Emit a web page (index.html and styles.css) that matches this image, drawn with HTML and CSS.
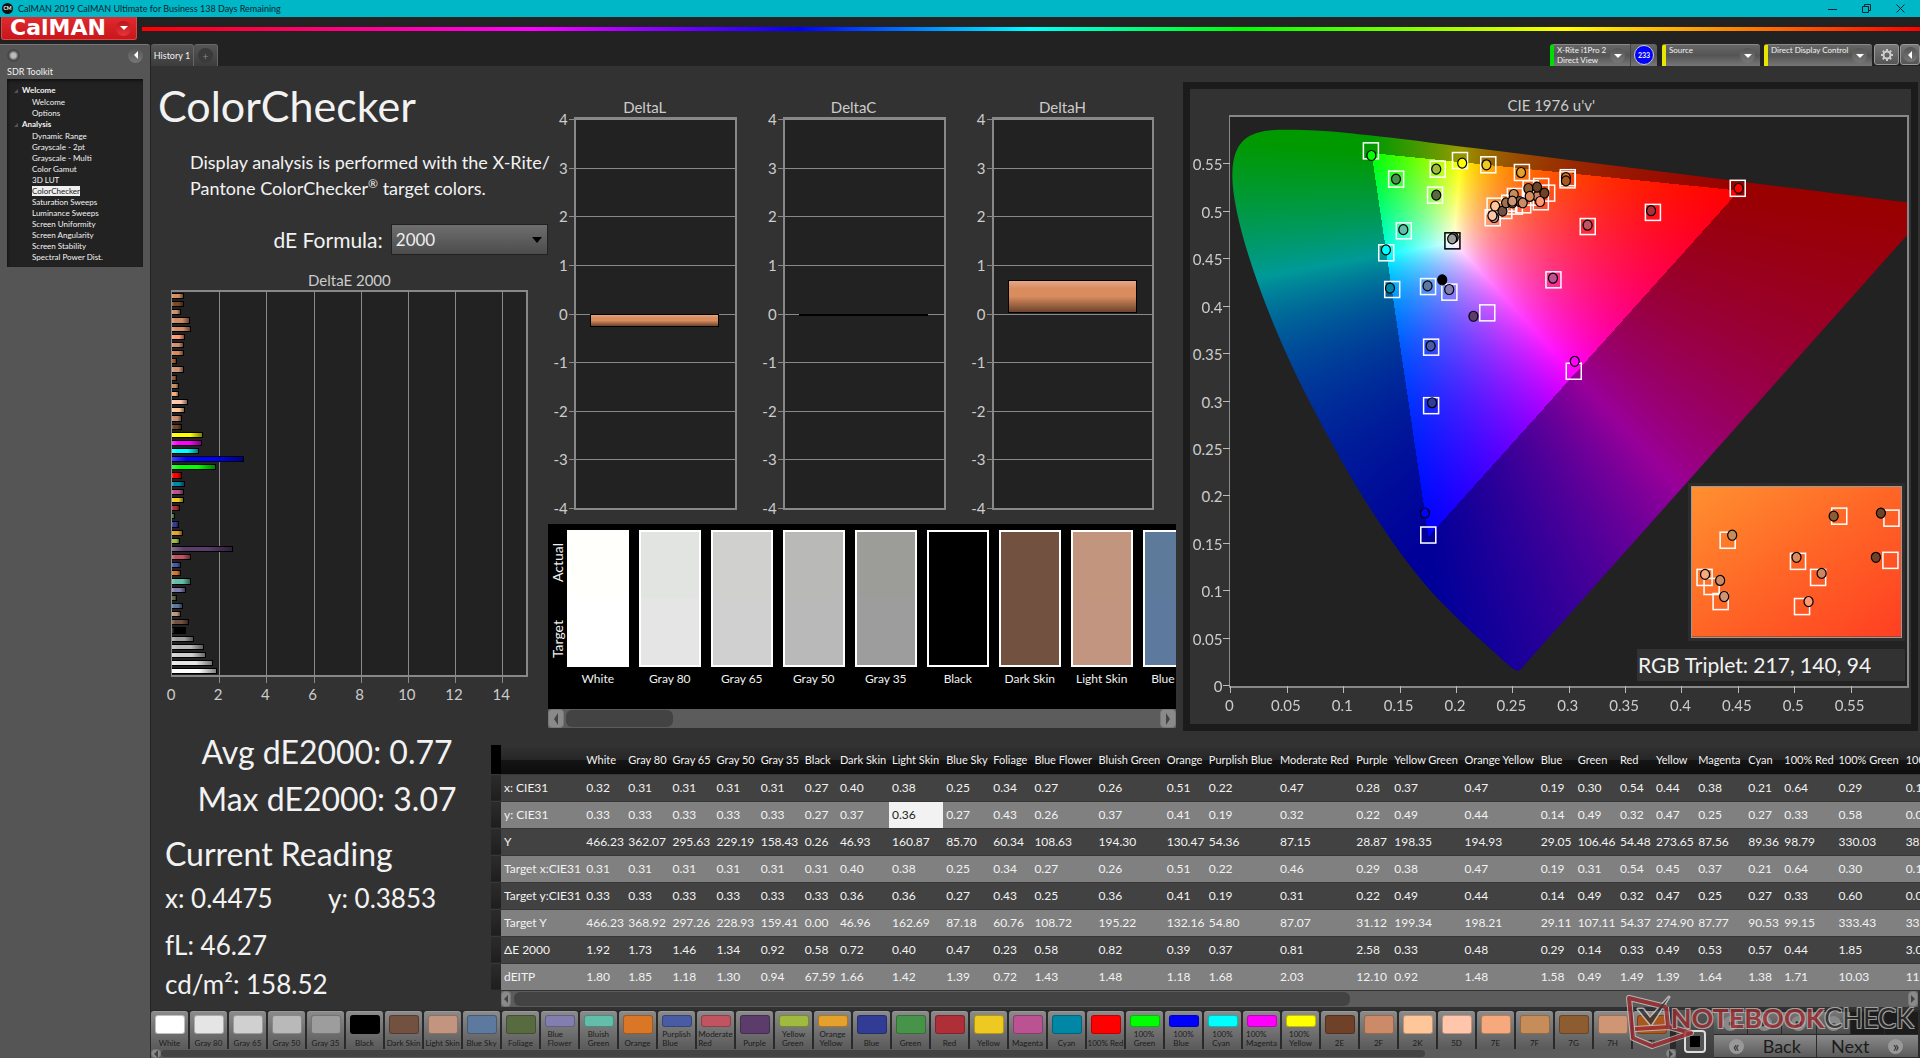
FILE: index.html
```html
<!DOCTYPE html>
<html lang="en">
<head>
    <meta charset="UTF-8">
    <meta name="viewport" content="width=device-width, initial-scale=1.0">
    <title>CalMAN 2019</title>
    <link rel="stylesheet" href="styles.css">
</head>
<body>
    <div class="titlebar">
        <span class="app-icon">CM</span>
        <span class="app-title">CalMAN 2019 CalMAN Ultimate for Business 138 Days Remaining</span>
        <div class="window-buttons">
            <button aria-label="Minimize"><svg width="9" height="9" viewBox="0 0 9 9"><path d="M0 5.5h9"/></svg></button>
            <button aria-label="Restore"><svg width="9" height="9" viewBox="0 0 9 9"><path d="M.5 2.500h6v6h-6zM2.500 2.500v-2h6v6h-2"/></svg></button>
            <button aria-label="Close"><svg width="9" height="9" viewBox="0 0 9 9"><path d="M.5.5l8 8M8.500.5l-8 8"/></svg></button>
        </div>
    </div>

    <div class="brandbar">
        <button class="logo">CalMAN <span class="round round-red"><i class="down"></i></span></button>
        <div class="rainbow"></div>
    </div>

    <div class="main">
        <div class="sidebar">
            <div class="sidebar-top">
                <span class="dot"></span>
                <button class="round" aria-label="Collapse"><i class="left"></i></button>
            </div>
            <div class="toolkit">SDR Toolkit</div>
            <ul class="tree">
                <li class="group">Welcome</li>
                <li>Welcome</li>
                <li>Options</li>
                <li class="group">Analysis</li>
                <li>Dynamic Range</li>
                <li>Grayscale - 2pt</li>
                <li>Grayscale - Multi</li>
                <li>Color Gamut</li>
                <li>3D LUT</li>
                <li><span class="current">ColorChecker</span></li>
                <li>Saturation Sweeps</li>
                <li>Luminance Sweeps</li>
                <li>Screen Uniformity</li>
                <li>Screen Angularity</li>
                <li>Screen Stability</li>
                <li>Spectral Power Dist.</li>
            </ul>
        </div>

        <div class="workspace">
            <div class="tabs">
                <button class="tab">History 1</button>
                <button class="tab tab-add" aria-label="Add tab"><span class="round">+</span></button>
                <div class="devices">
                    <button class="device meter"><span>X-Rite i1Pro 2<br>Direct View</span><span class="round"><i class="down"></i></span></button>
                    <span class="count"><b>233</b></span>
                    <button class="device source"><span>Source</span><span class="round"><i class="down"></i></span></button>
                    <button class="device display"><span>Direct Display Control</span><span class="round"><i class="down"></i></span></button>
                    <button class="square-button gear" aria-label="Settings">
                        <svg width="14" height="14" viewBox="0 0 14 14"><circle cx="7" cy="7" r="3.500"/><path d="M7 1v2M7 11v2M1 7h2M11 7h2M2.800 2.800l1.400 1.400M9.800 9.800l1.400 1.400M11.200 2.800l-1.400 1.400M4.200 9.800l-1.400 1.400"/></svg>
                    </button>
                    <button class="square-button" aria-label="Hide devices"><span class="round"><i class="left"></i></span></button>
                </div>
            </div>

            <div class="content">
                <div class="upper">
                    <div class="intro">
                        <h1>ColorChecker</h1>
                        <p>Display analysis is performed with the X-Rite/<br>Pantone ColorChecker<sup>®</sup> target colors.</p>
                        <div class="formula">
                            <label for="formula">dE Formula:</label>
                            <div class="select-box">
                                <select id="formula"><option>2000</option></select>
                                <i class="down"></i>
                            </div>
                        </div>
                        <div class="chart-title">DeltaE 2000</div>
                        <div class="de-plot" id="de-plot"></div>
                    </div>

                    <div class="middle">
                        <div class="deltas">
                            <div class="delta"><div class="chart-title">DeltaL</div><div class="delta-plot" data-value="-0.27"></div></div>
                            <div class="delta"><div class="chart-title">DeltaC</div><div class="delta-plot" data-value="0"></div></div>
                            <div class="delta"><div class="chart-title">DeltaH</div><div class="delta-plot" data-value="0.68"></div></div>
                        </div>
                        <div class="patches">
                            <div class="patch-side"><span>Actual</span><span>Target</span></div>
                            <div class="patch-list" id="patch-list"></div>
                        </div>
                        <div class="scrollbar patch-scroll">
                            <button aria-label="Scroll left"><i class="left"></i></button>
                            <div class="track"><div class="thumb"></div></div>
                            <button aria-label="Scroll right"><i class="right"></i></button>
                        </div>
                    </div>

                    <div class="cie">
                        <div class="chart-title">CIE 1976 u'v'</div>
                        <div class="cie-plot" id="cie-plot">
                            <canvas id="gamut"></canvas>
                            <svg class="markers" id="markers"></svg>
                            <svg class="inset" id="inset" viewBox="0 0 208 149"></svg>
                            <div class="triplet">RGB Triplet: 217, 140, 94</div>
                        </div>
                    </div>
                </div>

                <div class="lower">
                    <div class="readings">
                        <div class="summary">Avg dE2000: 0.77</div>
                        <div class="summary">Max dE2000: 3.07</div>
                        <h2>Current Reading</h2>
                        <div class="reading"><span>x: 0.4475</span><span>y: 0.3853</span></div>
                        <div class="reading">fL: 46.27</div>
                        <div class="reading last">cd/m²: 158.52</div>
                    </div>
                    <div class="data">
                        <div class="table-box">
                            <table id="data-table"></table>
                        </div>
                        <div class="scrollbar table-scroll">
                            <button aria-label="Scroll left"><i class="left"></i></button>
                            <div class="track"><div class="thumb"></div></div>
                            <button aria-label="Scroll right"><i class="right"></i></button>
                        </div>
                    </div>
                </div>
            </div>

            <div class="bottom">
                <div class="strip">
                    <div class="strip-list" id="strip-list"></div>
                    <div class="scrollbar strip-scroll">
                        <button aria-label="Scroll left"><i class="left"></i></button>
                        <div class="track"><div class="thumb"></div></div>
                        <button aria-label="Scroll right"><i class="right"></i></button>
                    </div>
                </div>
                <div class="stop-box"><button class="stop" aria-label="Stop"></button></div>
                <div class="nav">
                    <div class="transport">
                        <button aria-label="Read"><span class="round">■</span></button>
                        <button aria-label="Play"><span class="round">▶</span></button>
                        <button aria-label="Series"><span class="round">▮▮</span></button>
                        <button aria-label="Continuous"><span class="round">∞</span></button>
                        <span class="off"></span>
                        <span class="off"></span>
                    </div>
                    <div class="pages">
                        <button><span class="round">«</span>Back</button>
                        <button>Next<span class="round">»</span></button>
                    </div>
                </div>
                <div class="watermark">
                    <svg width="70" height="54" viewBox="0 0 70 54">
                        <g class="wm-edge">
                            <path d="M41 12L4 3l4 40 19 8 39-13-22-6-34 2M41 12l2 19"/>
                            <path class="wm-tick" d="M13 14l5 0 7 9L44 2 26 30z"/>
                        </g>
                        <path class="wm-red" d="M41 12L4 3l4 40 19 8 39-13-22-6-34 2M41 12l2 19"/>
                        <path class="wm-dark" d="M13 14l5 0 7 9L44 2 26 30z"/>
                    </svg>
                    <span class="wm-text"><b>NOTEBOOK</b>CHECK</span>
                </div>
            </div>
        </div>
    </div>
    <script src="script.js"></script>
</body>
</html>
```
FILE: styles.css
```css
* {
    box-sizing: border-box;
}

body {
    margin: 0;
    height: 100vh;
    min-height: 1040px;
    display: flex;
    flex-direction: column;
    background: #222;
    color: #f2f2f2;
    font-family: Lato, "Open Sans", sans-serif;
    overflow: hidden;
}

button {
    margin: 0;
    padding: 0;
    border: 0;
    background: none;
    color: inherit;
    font-family: inherit;
}

/* small arrows and round badges */
.down, .left, .right {
    display: block;
    width: 0;
    height: 0;
    border: 4px solid transparent;
}
.down {
    border-width: 4px 4px 0;
    border-top-color: currentColor;
}
.left {
    border-left-width: 0;
    border-right-color: currentColor;
}
.right {
    border-right-width: 0;
    border-left-color: currentColor;
}
.round {
    display: flex;
    align-items: center;
    justify-content: center;
    flex: none;
    width: 15px;
    height: 15px;
    border-radius: 50%;
    background: linear-gradient(#555, #777);
    color: #fff;
}
.round-red {
    background: linear-gradient(#b8161b, #e5363b);
}

/* window title */
.titlebar {
    flex: none;
    display: flex;
    align-items: center;
    height: 17px;
    padding-left: 2px;
    background: #00b7c7;
    color: #06252b;
}
.app-icon {
    width: 11px;
    height: 11px;
    margin-right: 5px;
    border-radius: 50%;
    background: #111;
    color: #fff;
    font-size: 5px;
    line-height: 11px;
    font-weight: bold;
    text-align: center;
}
.app-title {
    font-size: 9px;
}
.window-buttons {
    display: flex;
    margin-left: auto;
    padding-right: 3px;
}
.window-buttons button {
    display: flex;
    align-items: center;
    justify-content: center;
    width: 34px;
    height: 17px;
}
.window-buttons path {
    fill: none;
    stroke: #06252b;
}

.brandbar {
    flex: none;
    display: flex;
    height: 27px;
    padding-left: 1px;
    gap: 5px;
}
.logo {
    display: flex;
    align-items: center;
    justify-content: space-between;
    width: 136px;
    height: 23px;
    padding: 0 5px 0 8px;
    border: 1px solid #d9484b;
    border-top: 0;
    border-radius: 0 0 3px 3px;
    background: linear-gradient(#e02a2f, #c8161b);
    color: #fff;
    font-family: "DejaVu Sans", sans-serif;
    font-size: 22px;
    line-height: 22px;
    font-weight: bold;
}
.rainbow {
    flex: 1;
    height: 4px;
    margin-top: 10px;
    background: linear-gradient(90deg, #f00 0%, #f0f 22%, #00f 37%, #0ff 50%, #0f0 62%, #ff0 80%, #f00 100%);
}

.main {
    flex: 1;
    display: flex;
    min-height: 0;
}

/* sidebar */
.sidebar {
    flex: none;
    width: 150px;
    padding: 0 7px;
    border-top: 1px solid #777;
    border-radius: 0 3px 0 0;
    background: #555;
}
.sidebar-top {
    display: flex;
    align-items: center;
    justify-content: space-between;
    height: 20px;
}
.dot {
    width: 13px;
    height: 13px;
    border-radius: 50%;
    background: radial-gradient(circle, #bbb 25%, #484848 55%);
}
.toolkit {
    font-size: 9px;
    line-height: 14px;
}
.tree {
    margin: 0;
    padding: 6px 0 4px 25px;
    list-style: none;
    background: #222;
    box-shadow: inset 1px 2px 3px #111;
    font-size: 8px;
    line-height: 11px;
}
.tree .group {
    margin: 0 0 1px -10px;
    font-weight: bold;
}
.tree .group::before {
    content: "";
    float: left;
    margin: 4px 0 0 -8px;
    border: 2px solid #555;
    border-left-color: transparent;
    border-top-color: transparent;
}
.current {
    background: #eee;
    color: #222;
}

.workspace {
    flex: 1;
    display: flex;
    flex-direction: column;
    min-width: 0;
}
.tabs {
    flex: none;
    display: flex;
    height: 22px;
    padding-left: 1px;
}
.tab {
    width: 43px;
    border: 1px solid #666;
    border-width: 1px 1px 0 0;
    border-radius: 3px 3px 0 0;
    background: linear-gradient(#555, #3c3c3c);
    font-size: 9px;
}
.tab-add {
    display: flex;
    align-items: center;
    justify-content: center;
    width: 24px;
}
.tab-add .round {
    background: #3a3a3a;
    color: #888;
    font-size: 10px;
}
.devices {
    display: flex;
    margin-left: auto;
}
.device {
    display: flex;
    align-items: center;
    justify-content: space-between;
    padding: 0 5px 0 3px;
    border-left: 4px solid #e6e600;
    border-top: 1px solid #888;
    border-radius: 3px 3px 0 0;
    background: linear-gradient(#666, #555 50%, #777);
    font-size: 8px;
    line-height: 10px;
    text-align: left;
}
.device > span:first-child {
    align-self: flex-start;
    white-space: nowrap;
}
.meter {
    width: 80px;
    border-left-color: #0d0;
    border-radius: 3px 0 0 0;
}
.source {
    width: 98px;
    margin: 0 4px 0 5px;
}
.display {
    width: 108px;
    margin-right: 2px;
}
.count {
    display: flex;
    align-items: center;
    justify-content: center;
    width: 27px;
    border-left: 1px solid #444;
    border-radius: 0 3px 0 0;
    background: linear-gradient(#666, #555 50%, #777);
}
.count b {
    width: 20px;
    height: 20px;
    border: 1px solid #ccc;
    border-radius: 50%;
    background: #00f;
    font-size: 7px;
    line-height: 18px;
    text-align: center;
}
.square-button {
    display: flex;
    align-items: center;
    justify-content: center;
    width: 20px;
    height: 21px;
    border: 1px solid #999;
    border-radius: 3px;
    background: linear-gradient(#777, #555);
}
.gear {
    width: 25px;
    margin-right: 1px;
}
.gear svg {
    fill: none;
    stroke: #ccc;
    stroke-width: 2;
}

.content {
    flex: 1;
    display: flex;
    flex-direction: column;
    min-height: 0;
    border-left: 1px solid #222;
    background: #323232;
}
.upper {
    flex: 1;
    display: grid;
    grid-template-columns: 397fr 636fr 737fr;
    min-height: 0;
}
.upper > div {
    min-width: 0;
    min-height: 0;
}

.intro {
    display: flex;
    flex-direction: column;
    padding: 14px 20px 55px 20px;
}
h1 {
    margin: 0 0 17px -13px;
    font-size: 43px;
    line-height: 52px;
    font-weight: normal;
}
.intro p {
    margin: 0 -20px 23px 19px;
    font-size: 18px;
    line-height: 26px;
    white-space: nowrap;
}
.intro sup {
    font-size: 12px;
    line-height: 0;
}
.formula {
    display: flex;
    align-items: center;
    justify-content: flex-end;
    gap: 8px;
    height: 31px;
    margin: 0 -20px 15px 0;
    font-size: 21px;
}
.select-box {
    position: relative;
    width: 157px;
}
.select-box select {
    width: 100%;
    height: 31px;
    padding-left: 4px;
    border: 1px solid #222;
    border-radius: 0;
    background: linear-gradient(#6e6e6e, #4c4c4c);
    color: #eee;
    font-family: inherit;
    font-size: 17px;
    appearance: none;
}
.select-box .down {
    position: absolute;
    right: 6px;
    top: 13px;
    border-width: 6px 5px 0;
    color: #000;
}
.chart-title {
    flex: none;
    color: #ccc;
    font-size: 15px;
    line-height: 20px;
    text-align: center;
}

/* DeltaE bars */
.de-plot {
    position: relative;
    flex: 1;
    display: flex;
    flex-direction: column;
    border: 2px solid #888;
    border-left-width: 1px;
    background: #222;
}
.de-row {
    position: relative;
    flex: 1;
    padding: 1px 0;
}
.de-bar {
    height: 100%;
    border: 1px solid #000;
    border-left: 0;
}
.grid-v, .grid-h {
    position: absolute;
    background: #8a8a8a;
}
.grid-v {
    top: 0;
    bottom: -8px;
    width: 1px;
}
.grid-h {
    left: -7px;
    right: 0;
    height: 1px;
}
.axis-x, .axis-y {
    position: absolute;
    color: #ccc;
    font-size: 15px;
    line-height: 20px;
}
.axis-x {
    top: 100%;
    width: 40px;
    margin: 9px 0 0 -21px;
    text-align: center;
}
.axis-y {
    right: 100%;
    margin: -10px 8px 0 0;
}

/* middle column */
.middle {
    display: flex;
    flex-direction: column;
    padding: 31px 0 4px 0;
}
.deltas {
    flex: 1;
    display: flex;
    gap: 25px;
    padding: 0 29px 14px 5px;
}
.delta {
    flex: 1;
    display: flex;
    flex-direction: column;
}
.delta-plot {
    position: relative;
    flex: 1;
    margin-left: 21px;
    border: 2px solid #888;
    background: #222;
}
.delta-bar {
    position: absolute;
    left: 9%;
    right: 10%;
    border: 1px solid #000;
    background: linear-gradient(#e5a888, #d98c5e 25%, #d98c5e 50%, #6b442c);
}
.patches {
    flex: none;
    display: flex;
    height: 185px;
    overflow: hidden;
    margin-right: 7px;
    background: #000;
}
.patch-side {
    flex: none;
    display: flex;
    justify-content: space-around;
    flex-direction: column;
    align-items: center;
    width: 19px;
    height: 153px;
    font-size: 14px;
}
.patch-side span {
    writing-mode: vertical-rl;
    transform: rotate(180deg);
}
.patch-list {
    display: flex;
    gap: 10px;
    padding-top: 6px;
}
.patch {
    flex: none;
    width: 62px;
    font-size: 12px;
    line-height: 24px;
    text-align: center;
    white-space: nowrap;
}
.patch-color {
    height: 137px;
    border: 2px solid #fff;
}

/* scrollbars */
.scrollbar {
    flex: none;
    display: flex;
    background: #5c5c5c;
    color: #444;
}
.scrollbar button {
    display: flex;
    align-items: center;
    justify-content: center;
    width: 16px;
    border: 1px solid #777;
    border-radius: 4px;
    background: #8a8a8a;
}
.track {
    flex: 1;
    padding: 1px 0;
}
.thumb {
    height: 100%;
    border-radius: 6px;
    background: #434343;
}
.patch-scroll {
    height: 19px;
    margin-right: 7px;
}
.patch-scroll .left, .patch-scroll .right {
    border-top-width: 6px;
    border-bottom-width: 6px;
}
.patch-scroll .track {
    padding-left: 2px;
}
.patch-scroll .thumb {
    width: 18%;
}
.table-scroll {
    height: 16px;
    margin: 1px 2px 0 10px;
}
.table-scroll button, .strip-scroll button {
    width: 10px;
}
.table-scroll .track {
    padding-left: 3px;
}
.table-scroll .thumb {
    width: 60%;
}
.strip-scroll {
    height: 9px;
}
.strip-scroll .thumb {
    width: 84%;
}

/* CIE chart */
.cie {
    display: flex;
    flex-direction: column;
    margin: 16px 2px 1px 0;
    padding: 6px 2px 36px 39px;
    border: 7px solid #1b1b1b;
    background: #323232;
}
.cie .chart-title {
    padding-right: 36px;
}
.cie-plot {
    position: relative;
    flex: 1;
    border: 2px solid #888;
    border-left-width: 1px;
    background: #222;
}
.cie-plot canvas, .markers {
    position: absolute;
    left: 0;
    top: 0;
    width: 100%;
    height: 100%;
}
.tick-x, .tick-y {
    position: absolute;
    background: #bbb;
}
.tick-x {
    top: 100%;
    width: 1px;
    height: 7px;
}
.tick-y {
    right: 100%;
    width: 7px;
    height: 1px;
}
.inset {
    position: absolute;
    right: 5px;
    bottom: 48px;
    width: 211px;
    border: 1px solid #999;
    outline: 3px solid #2c2c2c;
}
.triplet {
    position: absolute;
    right: 2px;
    bottom: 5px;
    width: 268px;
    padding-left: 1px;
    background: #323232;
    font-size: 21px;
    line-height: 32px;
    white-space: nowrap;
}

/* readings and table */
.lower {
    flex: none;
    display: flex;
    height: 278px;
}
.readings {
    flex: none;
    width: 340px;
    padding: 0 0 0 14px;
    white-space: nowrap;
}
.summary {
    padding-right: 2px;
    margin-bottom: 7px;
    font-size: 32px;
    line-height: 40px;
    text-align: center;
}
h2 {
    margin: 15px 0 8px;
    font-size: 32px;
    line-height: 40px;
    font-weight: normal;
}
.reading {
    display: flex;
    margin-bottom: 15px;
    font-size: 26px;
    line-height: 32px;
}
.reading span {
    width: 166px;
}
.reading.last {
    margin-top: -8px;
}
.data {
    flex: 1;
    min-width: 0;
    padding-top: 13px;
}
.table-box {
    overflow: hidden;
}
table {
    width: 1474px;
    table-layout: fixed;
    border-collapse: collapse;
    font-size: 12px;
}
th, td {
    height: 27px;
    padding: 0 0 0 3px;
    font-weight: normal;
    text-align: left;
    white-space: nowrap;
}
thead th {
    height: 29px;
    background: linear-gradient(#333, #262626 50%, #151515 50%, #0c0c0c);
    font-size: 11px;
}
tbody tr {
    background: #424242;
    border-top: 1px solid #373737;
}
tbody tr:nth-child(even) {
    background: #808080;
}
thead th:first-child {
    background: #000;
}
tbody td:first-child {
    background: linear-gradient(#2c2c2c, #1e1e1e);
}
td.selected {
    background: #f2f2f2;
    color: #222;
}

/* bottom strip */
.bottom {
    position: relative;
    flex: none;
    display: flex;
    height: 48px;
    background: #2a2a2a;
}
.strip {
    flex: 1;
    min-width: 0;
    padding: 1px 0 0 1px;
}
.strip-list {
    display: flex;
    gap: 2px;
    height: 38px;
    overflow: hidden;
}
.strip-list button {
    flex: none;
    display: flex;
    flex-direction: column;
    align-items: center;
    justify-content: space-between;
    width: 37px;
    padding: 3px 0 1px;
    border-top: 1px solid #999;
    border-radius: 3px 3px 0 0;
    background: linear-gradient(#8a8a8a, #5a5a5a);
    color: #1c1c1c;
    font-size: 8px;
    line-height: 9px;
    white-space: nowrap;
    text-align: left;
}
.chip {
    width: 30px;
    flex: 1;
    max-height: 19px;
    margin-bottom: 3px;
    border: 1px solid rgba(0, 0, 0, 0.25);
    border-radius: 3px;
}
.stop-box {
    display: flex;
    align-items: flex-end;
    width: 38px;
    padding: 0 8px 5px;
    background: linear-gradient(#555, #3a3a3a);
}
.stop {
    width: 22px;
    height: 23px;
    border: 2px solid #ddd;
    border-radius: 4px;
    background: #000;
    box-shadow: inset 0 0 0 4px #555;
}
.nav {
    flex: none;
    width: 206px;
    padding-right: 2px;
}
.transport, .pages {
    display: flex;
    gap: 1px;
}
.transport {
    height: 24px;
    padding-top: 2px;
}
.transport > * {
    flex: 1;
    display: flex;
    align-items: center;
    justify-content: center;
    background: linear-gradient(#777, #4a4a4a);
}
.transport .round {
    background: #888;
    color: #222;
    font-size: 7px;
}
.transport .off {
    background: #1c1c1c;
}
.pages button {
    flex: 1;
    display: flex;
    align-items: center;
    justify-content: center;
    gap: 19px;
    height: 22px;
    margin-top: 1px;
    background: linear-gradient(#8a8a8a, #5a5a5a);
    color: #1c1c1c;
    font-size: 18px;
}
.pages .round {
    background: #999;
    color: #222;
    font-size: 15px;
    line-height: 15px;
}
.watermark {
    position: absolute;
    right: 6px;
    bottom: 9px;
    display: flex;
    align-items: flex-start;
    opacity: 0.8;
}
.watermark svg {
    margin-right: -24px;
}
.watermark path {
    fill: none;
    stroke-linejoin: round;
}
.wm-edge {
    stroke: #ccc;
    stroke-width: 6;
}
.wm-edge .wm-tick {
    stroke-width: 3;
}
.wm-red {
    stroke: #a02c30;
    stroke-width: 4;
}
.watermark .wm-dark {
    fill: #333;
}
.wm-text {
    margin-top: 6px;
    color: #2a2a2a;
    font-size: 27px;
    line-height: 34px;
    text-shadow: 1px 1px #bbb, -1px -1px #bbb, 1px -1px #bbb, -1px 1px #bbb;
}
.wm-text b {
    color: #a02c30;
}
```
FILE: script.js
```js
// patch name, colour, table width, then the table rows
var rows = ['x: CIE31', 'y: CIE31', 'Y', 'Target x:CIE31', 'Target y:CIE31', 'Target Y', 'ΔE 2000', 'dEITP'];
var patches = [
    ['White', '#ffffff', 42, '0.32 0.33 466.23 0.31 0.33 466.23 1.92 1.80'],
    ['Gray 80', '#e5e5e5', 44, '0.31 0.33 362.07 0.31 0.33 368.92 1.73 1.85'],
    ['Gray 65', '#d0d0d0', 44, '0.31 0.33 295.63 0.31 0.33 297.26 1.46 1.18'],
    ['Gray 50', '#b9b9b9', 44, '0.31 0.33 229.19 0.31 0.33 228.93 1.34 1.30'],
    ['Gray 35', '#9d9d9d', 44, '0.31 0.33 158.43 0.31 0.33 159.41 0.92 0.94'],
    ['Black', '#000000', 35, '0.27 0.27 0.26 0.31 0.33 0.00 0.58 67.59'],
    ['Dark Skin', '#735141', 52, '0.40 0.37 46.93 0.40 0.36 46.96 0.72 1.66'],
    ['Light Skin', '#c29580', 54, '0.38 0.36 160.87 0.38 0.36 162.69 0.40 1.42'],
    ['Blue Sky', '#5d799d', 47, '0.25 0.27 85.70 0.25 0.27 87.18 0.47 1.39'],
    ['Foliage', '#586b40', 41, '0.34 0.43 60.34 0.34 0.43 60.76 0.23 0.72'],
    ['Blue Flower', '#827fb0', 64, '0.27 0.26 108.63 0.27 0.25 108.72 0.58 1.43'],
    ['Bluish Green', '#62bda9', 68, '0.26 0.37 194.30 0.26 0.36 195.22 0.82 1.48'],
    ['Orange', '#d97726', 42, '0.51 0.41 130.47 0.51 0.41 132.16 0.39 1.18'],
    ['Purplish Blue', '#4a5ba5', 71, '0.22 0.19 54.36 0.22 0.19 54.80 0.37 1.68'],
    ['Moderate Red', '#c25361', 76, '0.47 0.32 87.15 0.46 0.31 87.07 0.81 2.03'],
    ['Purple', '#5c3c6b', 38, '0.28 0.22 28.87 0.29 0.22 31.12 2.58 12.10'],
    ['Yellow Green', '#9fba3f', 70, '0.37 0.49 198.35 0.38 0.49 199.34 0.33 0.92'],
    ['Orange Yellow', '#e6a12d', 76, '0.47 0.44 194.93 0.47 0.44 198.21 0.48 1.48'],
    ['Blue', '#323c94', 37, '0.19 0.14 29.05 0.19 0.14 29.11 0.29 1.58'],
    ['Green', '#479349', 42, '0.30 0.49 106.46 0.31 0.49 107.11 0.14 0.49'],
    ['Red', '#ae2f38', 36, '0.54 0.32 54.48 0.54 0.32 54.37 0.33 1.49'],
    ['Yellow', '#edc921', 42, '0.44 0.47 273.65 0.45 0.47 274.90 0.49 1.39'],
    ['Magenta', '#bb5292', 50, '0.38 0.25 87.56 0.37 0.25 87.77 0.53 1.64'],
    ['Cyan', '#0087a6', 36, '0.21 0.27 89.36 0.21 0.27 90.53 0.57 1.38'],
    ['100% Red', '#ff0000', 54, '0.64 0.33 98.79 0.64 0.33 99.15 0.44 1.71'],
    ['100% Green', '#00ff00', 67, '0.29 0.58 330.03 0.30 0.60 333.43 1.85 10.03'],
    ['100% Blue', '#0000ff', 62, '0.15 0.07 38.10 0.15 0.06 33.20 3.07 11.90']
];
var extra = [
    ['100% Cyan', '#00ffff', 1.13], ['100% Magenta', '#ff00ff', 1.28], ['100% Yellow', '#ffff00', 1.33],
    ['2E', '#6f4128', 0.42], ['2F', '#cb8b69', 0.42], ['2K', '#ffc799', 0.55], ['5D', '#ffc6ab', 0.67],
    ['7E', '#f6a97c', 0.3], ['7F', '#c68d5b', 0.3], ['7G', '#8d5c31', 0.2], ['7H', '#cf9676', 0.5],
    ['7I', '#a8581e', 0.2], ['7J', '#d98858', 0.5], ['8D', '#cf8f70', 0.5], ['8E', '#ff9a75', 0.55],
    ['8F', '#d39066', 0.82], ['8G', '#cf8b66', 0.77], ['8H', '#cc8f6c', 0.37], ['8I', '#7a4a28', 0.5],
    ['8J', '#d98c5e', 0.5]
];

function byId(id) {
    return document.getElementById(id);
}

function add(parent, cls, style, text) {
    var el = document.createElement('div');
    el.className = cls;
    el.style.cssText = style || '';
    if (text !== undefined) el.textContent = text;
    parent.appendChild(el);
    return el;
}

// DeltaE chart, last patch on top
var dePlot = byId('de-plot');
for (var i = 0; i < 15; i += 2) {
    if (i) add(dePlot, 'grid-v', 'left:' + i / 15 * 100 + '%');
    add(dePlot, 'axis-x', 'left:' + i / 15 * 100 + '%', i);
}
var bars = patches.map(function (p) {
    return [p[1], parseFloat(p[3].split(' ')[6])];
}).concat(extra.map(function (p) {
    return [p[1], p[2]];
}));
bars.reverse().forEach(function (bar) {
    var row = add(dePlot, 'de-row');
    add(row, 'de-bar', 'width:' + bar[1] / 15 * 100 + '%;background:linear-gradient(90deg,rgba(255,255,255,.25),transparent 20%,transparent 60%,rgba(0,0,0,.5)) ' + bar[0]);
});

// DeltaL, DeltaC, DeltaH
document.querySelectorAll('.delta-plot').forEach(function (plot) {
    for (var n = 4; n >= -4; n--) {
        var top = (4 - n) / 8 * 100;
        add(plot, 'grid-h', 'top:' + top + '%');
        add(plot, 'axis-y', 'top:' + top + '%', n);
    }
    var value = parseFloat(plot.dataset.value);
    var start = (4 - Math.max(value, 0)) / 8 * 100;
    add(plot, 'delta-bar', 'top:' + start + '%;height:' + Math.abs(value) / 8 * 100 + '%');
});

// actual over target
var actual = ['#fffffb', '#e1e4e1', '#d0d0ce', '#b9b9b7', '#9c9c99', '#000000', '#735141', '#c2957e', '#5d7a9a'];
actual.forEach(function (color, i) {
    var patch = add(byId('patch-list'), 'patch');
    add(patch, 'patch-color', 'background:linear-gradient(' + color + ' 50%,' + patches[i][1] + ' 50%)');
    add(patch, 'patch-name', '', patches[i][0]);
});

// data table
var html = '<colgroup><col style="width:10px"><col style="width:82px">';
patches.forEach(function (p) {
    html += '<col style="width:' + p[2] + 'px">';
});
html += '</colgroup><thead><tr><th></th><th></th>';
patches.forEach(function (p) {
    html += '<th>' + p[0] + '</th>';
});
html += '</tr></thead><tbody>';
rows.forEach(function (name, r) {
    html += '<tr><td></td><td>' + name + '</td>';
    patches.forEach(function (p, c) {
        html += '<td' + (r === 1 && c === 7 ? ' class="selected"' : '') + '>' + p[3].split(' ')[r] + '</td>';
    });
    html += '</tr>';
});
byId('data-table').innerHTML = html + '</tbody>';

// buttons below
var twoLines = ['Blue Flower', 'Bluish Green', 'Purplish Blue', 'Moderate Red', 'Yellow Green', 'Orange Yellow'];
patches.concat(extra.slice(0, 12)).forEach(function (p) {
    var name = p[0];
    if (twoLines.indexOf(name) > -1 || (name.indexOf('100%') === 0 && name !== '100% Red')) {
        name = name.replace(' ', '<br>');
    }
    byId('strip-list').insertAdjacentHTML('beforeend',
        '<button><span class="chip" style="background:' + p[1] + '"></span><span>' + name + '</span></button>');
});

// CIE axes, 0 to 0.6 both ways
var ciePlot = byId('cie-plot');
for (var k = 0; k < 12; k++) {
    var label = String(k * 5 / 100);
    add(ciePlot, 'tick-x', 'left:' + k / 12 * 100 + '%');
    add(ciePlot, 'axis-x', 'left:' + k / 12 * 100 + '%', label);
    add(ciePlot, 'tick-y', 'bottom:' + k / 12 * 100 + '%');
    add(ciePlot, 'axis-y', 'top:' + (12 - k) / 12 * 100 + '%', label);
}

// spectral locus, x y
var locus = [
    [.1741, .0050], [.1733, .0048], [.1714, .0051], [.1689, .0069], [.1644, .0109], [.1566, .0177], [.1440, .0297],
    [.1355, .0399], [.1241, .0578], [.1096, .0868], [.0913, .1327], [.0687, .2007], [.0454, .2950], [.0235, .4127],
    [.0082, .5384], [.0039, .6548], [.0139, .7502], [.0389, .8120], [.0743, .8338], [.1142, .8262], [.1547, .8059],
    [.1929, .7816], [.2296, .7543], [.2658, .7243], [.3016, .6923], [.3731, .6245], [.4441, .5547], [.5125, .4866],
    [.5752, .4242], [.6270, .3725], [.6658, .3340], [.6915, .3083], [.7190, .2809], [.7347, .2653]
];

function drawGamut() {
    var canvas = byId('gamut');
    var w = canvas.width = canvas.clientWidth;
    var h = canvas.height = canvas.clientHeight;
    var ctx = canvas.getContext('2d');
    var img = ctx.createImageData(w, h);
    for (var py = 0; py < h; py++) {
        for (var px = 0; px < w; px++) {
            var u = px / w * 0.6;
            var v = Math.max((h - py) / h * 0.6, 0.001);
            var d = 6 * u - 16 * v + 12;
            var x = 9 * u / d;
            var y = 4 * v / d;
            var X = x / y;
            var Z = (1 - x - y) / y;
            var rgb = [
                3.2406 * X - 1.5372 - 0.4986 * Z,
                -0.9689 * X + 1.8758 + 0.0415 * Z,
                0.0557 * X - 0.2040 + 1.0570 * Z
            ];
            var scale = Math.min(rgb[0], rgb[1], rgb[2]) < 0 ? 0.6 : 1;
            var max = Math.max(rgb[0], rgb[1], rgb[2]);
            var at = (py * w + px) * 4;
            for (var c = 0; c < 3; c++) {
                img.data[at + c] = 255 * scale * Math.max(rgb[c], 0) / max;
            }
            img.data[at + 3] = 255;
        }
    }
    ctx.putImageData(img, 0, 0);
    // cut to the horseshoe
    ctx.globalCompositeOperation = 'destination-in';
    ctx.beginPath();
    var pts = locus.map(function (p) {
        var d = -2 * p[0] + 12 * p[1] + 3;
        return [4 * p[0] / d / 0.6 * w, h - 9 * p[1] / d / 0.6 * h];
    });
    ctx.moveTo(pts[0][0], pts[0][1]);
    for (var i = 1; i < pts.length - 1; i++) {
        ctx.quadraticCurveTo(pts[i][0], pts[i][1], (pts[i][0] + pts[i + 1][0]) / 2, (pts[i][1] + pts[i + 1][1]) / 2);
    }
    ctx.lineTo(pts[i][0], pts[i][1]);
    ctx.closePath();
    ctx.fill();
}
drawGamut();
window.addEventListener('resize', drawGamut);

// target u v
var targets = [
    [.1245, .5643], [.1469, .5345], [.1838, .5450], [.2035, .5541], [.2286, .5496], [.2584, .5415], [.1814, .5176],
    [.1537, .4800], [.1381, .4568], [.1434, .4181], [.1752, .4212], [.1941, .4153], [.2277, .3935], [.2864, .4283],
    [.3168, .4845], [.2991, .5360], [.2989, .5337], [.2342, .5060], [.2325, .4937], [.2428, .5014], [.2472, .5091],
    [.2522, .5162], [.2522, .5060], [.2596, .5074], [.2661, .5243], [.2755, .5267], [.2808, .5197], [.2752, .5106],
    [.2670, .5155], [.4498, .5248], [.3746, .4994], [.1779, .3573], [.1779, .2956], [.3044, .3319], [.1754, .1592],
    [.1968, .4694, '#000']
];
// measured u v
var measured = [
    [.1254, .5594, '#00ff00'], [.1472, .5345, '#479349'], [.1829, .5450, '#9fba3f'], [.2059, .5514, '#ffff00'],
    [.2274, .5496, '#edc921'], [.2581, .5415, '#e6a12d'], [.1829, .5176, '#586b40'], [.1537, .4812, '#62bda9'],
    [.1383, .4599, '#00ffff'], [.1419, .4195, '#0087a6'], [.1752, .4219, '#5d799d'], [.1882, .4283, '#000000'],
    [.1944, .4181, '#827fb0'], [.2159, .3899, '#5c3c6b'], [.1984, .4730, '#555555'], [.1970, .4715, '#9d9d9d'],
    [.2864, .4300, '#bb5292'], [.3171, .4859, '#c25361'], [.2979, .5360, '#d97726'], [.2979, .5327, '#a8581e'],
    [.2351, .5060, '#ffc799'], [.2342, .4940, '#c29580'], [.2327, .4961, '#ffc6ab'], [.2416, .5007, '#735141'],
    [.2448, .5095, '#a0704f'], [.2516, .5183, '#c68d5b'], [.2569, .5109, '#8d5c31'], [.2504, .5095, '#cf8f70'],
    [.2504, .5112, '#cf9676'], [.2596, .5095, '#cb8b69'], [.2646, .5246, '#8d5c31'], [.2726, .5162, '#cd8562'],
    [.2723, .5260, '#6f4323'], [.2788, .5197, '#6f4128'], [.2658, .5162, '#d98c5e'], [.2750, .5109, '#ff9a75'],
    [.4510, .5248, '#ff0000'], [.3734, .5012, '#ae2f38'], [.1779, .3586, '#4a5ba5'], [.1792, .2987, '#323c94'],
    [.3057, .3424, '#ff00ff'], [.1729, .1824, '#0000ff']
];
var box = '<rect x="-7" y="-8" width="15" height="16" fill="none" stroke-width="1.500" stroke="';
var spot = '<ellipse rx="4.500" ry="5" stroke="#000" stroke-width="1.200" fill="';
function marker(u, v, shape, color) {
    return '<svg overflow="visible" x="' + u / 0.6 * 100 + '%" y="' + (100 - v / 0.6 * 100) + '%">' + shape + color + '"/></svg>';
}
byId('markers').innerHTML = targets.map(function (t) {
    return marker(t[0], t[1], box, t[2] || '#fff');
}).join('') + measured.map(function (m) {
    return marker(m[0], m[1], spot, m[2]);
}).join('');

// enlarged part around the skin tones
var insetTargets = [[146, 29], [198, 31], [197, 73], [35, 53], [105, 74], [125, 90], [109, 119], [12, 90], [19, 99], [28, 114]];
var insetMeasured = [
    [141, 29, '#8d5c31'], [188, 26, '#6f4323'], [183, 70, '#6f4128'], [40, 48, '#c68d5b'], [104, 70, '#d98c5e'],
    [129, 86, '#cd8562'], [116, 114, '#ff9a75'], [13, 87, '#f6a97c'], [28, 93, '#cb8b69'], [32, 109, '#cf9676']
];
var defs = '<defs><linearGradient id="skin" x1="0" y1="0" x2="1" y2="1"><stop offset="0" stop-color="#ff9030"/>' +
    '<stop offset=".5" stop-color="#ff6526"/><stop offset="1" stop-color="#ff3f22"/></linearGradient></defs>' +
    '<rect width="208" height="149" fill="url(#skin)"/>';
byId('inset').innerHTML = defs + insetTargets.map(function (t) {
    return '<g transform="translate(' + t[0] + ' ' + t[1] + ')">' + box + '#fff"/></g>';
}).join('') + insetMeasured.map(function (m) {
    return '<g transform="translate(' + m[0] + ' ' + m[1] + ')">' + spot + m[2] + '"/></g>';
}).join('');
```
